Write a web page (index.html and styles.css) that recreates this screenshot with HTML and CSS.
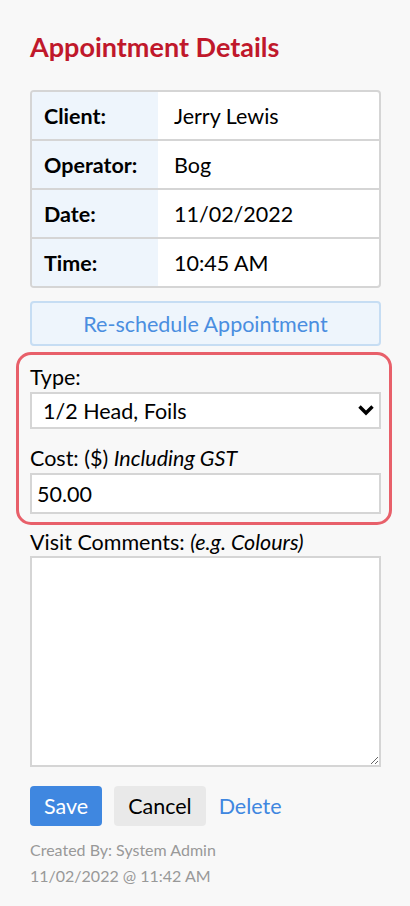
FILE: index.html
```html
<!DOCTYPE html>
<html lang="en">
<head>
    <meta charset="UTF-8">
    <meta name="viewport" content="width=device-width, initial-scale=1.0">
    <title>Appointment Details</title>
    <link rel="stylesheet" href="styles.css">
</head>
<body>
    <h1 class="title">Appointment Details</h1>

    <table class="details">
        <tr><th>Client:</th><td>Jerry Lewis</td></tr>
        <tr><th>Operator:</th><td>Bog</td></tr>
        <tr><th>Date:</th><td>11/02/2022</td></tr>
        <tr><th>Time:</th><td>10:45 AM</td></tr>
    </table>

    <button type="button" class="reschedule">Re-schedule Appointment</button>

    <form id="visitForm">
        <div class="highlight">
            <label for="type">Type:</label>
            <div class="select-wrap">
                <select id="type" name="type">
                    <option>1/2 Head, Foils</option>
                </select>
                <svg class="chevron" width="18" height="12" viewBox="0 0 18 12">
                    <path d="M2.5 2.5 L9 9 L15.5 2.5" fill="none" stroke="#000" stroke-width="3.4"/>
                </svg>
            </div>

            <label for="cost" class="cost-label">Cost: ($) <em>Including GST</em></label>
            <input type="text" id="cost" name="cost" value="50.00">
        </div>

        <label for="comments" class="comments-label">Visit Comments: <em>(e.g. Colours)</em></label>
        <textarea id="comments" name="comments"></textarea>

        <div class="actions">
            <button type="button" class="save">Save</button>
            <button type="button" class="cancel">Cancel</button>
            <a href="#" class="delete">Delete</a>
        </div>
    </form>

    <p class="meta">Created By: System Admin<br>11/02/2022 @ 11:42 AM</p>
</body>
</html>
```

FILE: styles.css
```css
body {
    font-family: Lato, "Liberation Sans", sans-serif;
    background-color: #f8f8f8;
    color: #000;
    margin: 0;
    padding: 0 29px 0 30px;
}
.title {
    color: #c0182b;
    font-size: 27px;
    line-height: 32px;
    font-weight: bold;
    margin: 0;
    padding: 31px 0 27px;
}
.details {
    width: 100%;
    border-collapse: separate;
    border-spacing: 0;
    border: 2px solid #d5d5d5;
    border-radius: 4px;
    background: #fff;
    font-size: 21.5px;
    overflow: hidden;
}
.details th, .details td {
    height: 47px;
    padding: 0 12px;
    text-align: left;
    border-top: 2px solid #d5d5d5;
}
.details tr:first-child th, .details tr:first-child td {
    border-top: none;
}
.details th {
    width: 102px;
    background-color: #eef5fc;
    font-weight: bold;
}
.details td {
    padding-left: 16px;
}
.reschedule {
    display: block;
    width: 100%;
    height: 45px;
    margin-top: 13px;
    background-color: #eef5fc;
    border: 2px solid #c6ddf3;
    border-radius: 4px;
    color: #4a8ee0;
    font-family: inherit;
    font-size: 21.5px;
}
form {
    margin: 0;
}
.highlight {
    margin: 6px -11px 0 -14px;
    padding: 10px 8px 8px 11px;
    border: 3px solid #e8606a;
    border-radius: 15px;
}
label {
    display: block;
    font-size: 21.5px;
    line-height: 24px;
}
.select-wrap {
    position: relative;
    margin-top: 3px;
}
select, input, textarea {
    display: block;
    width: 100%;
    box-sizing: border-box;
    border: 2px solid #d5d5d5;
    border-radius: 0;
    background: #fff;
    font-family: inherit;
    font-size: 21.5px;
    color: #000;
    margin: 0;
}
select {
    height: 37px;
    padding: 0 11px;
    appearance: none;
    -webkit-appearance: none;
}
.chevron {
    position: absolute;
    right: 6px;
    top: 12px;
}
.highlight input {
    height: 41px;
    padding: 0 5px;
    margin-top: 3px;
}
.cost-label {
    margin-top: 17px;
}
.comments-label {
    margin-top: 5px;
}
textarea {
    height: 211px;
    margin-top: 2px;
    resize: vertical;
}
.actions {
    display: flex;
    align-items: center;
    gap: 12px;
    margin-top: 19px;
}
.actions button {
    height: 40px;
    padding: 0 14px;
    border: none;
    border-radius: 4px;
    font-family: inherit;
    font-size: 21.5px;
}
.save {
    background-color: #3f87e0;
    color: #fff;
}
.cancel {
    background-color: #e9e9e9;
    color: #000;
}
.delete {
    color: #3f87e0;
    text-decoration: none;
    font-size: 21.5px;
    margin-left: 1px;
}
.meta {
    color: #999;
    font-size: 16px;
    line-height: 26px;
    margin: 11px 0 0;
}
```
